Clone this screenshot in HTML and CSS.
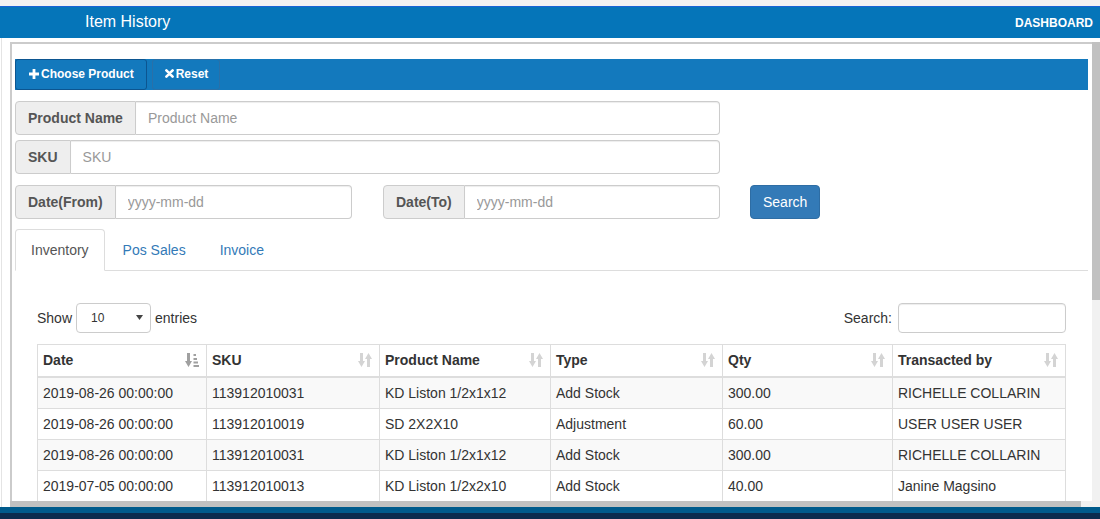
FILE: index.html
```html
<!DOCTYPE html>
<html lang="en">
<head>
<meta charset="utf-8">
<title>Item History</title>
<link rel="stylesheet" href="styles.css">
</head>
<body>
<div class="topstrip"></div>
<header class="appbar">
  <span class="title">Item History</span>
  <a class="dash">DASHBOARD</a>
</header>
<div class="workspace">
  <div class="viewport">
    <div class="panel">
      <div class="toolbar">
        <button class="tbtn tbtn-main">
          <svg width="10" height="10" viewBox="0 0 10 10"><path d="M3.6 0h2.8v3.6H10v2.8H6.4V10H3.6V6.4H0V3.6h3.6z" fill="#fff"/></svg>
          <span>Choose Product</span>
        </button>
        <button class="tbtn tbtn-reset">
          <svg width="9" height="9" viewBox="0 0 9 9"><path d="M1.4 1.4L7.6 7.6M7.6 1.4L1.4 7.6" stroke="#fff" stroke-width="2.6" stroke-linecap="round"/></svg>
          <span>Reset</span>
        </button>
      </div>

      <div class="igroup igroup-first">
        <span class="addon">Product Name</span>
        <input class="ifield" type="text" placeholder="Product Name">
      </div>
      <div class="igroup igroup-sku">
        <span class="addon">SKU</span>
        <input class="ifield" type="text" placeholder="SKU">
      </div>
      <div class="date-row">
        <div class="igroup igroup-date">
          <span class="addon">Date(From)</span>
          <input class="ifield" type="text" placeholder="yyyy-mm-dd">
        </div>
        <div class="igroup igroup-date igroup-to">
          <span class="addon">Date(To)</span>
          <input class="ifield" type="text" placeholder="yyyy-mm-dd">
        </div>
        <button class="btn-search">Search</button>
      </div>

      <nav class="tabs">
        <a class="tab active">Inventory</a>
        <a class="tab">Pos Sales</a>
        <a class="tab">Invoice</a>
      </nav>

      <div class="tab-content">
        <div class="dt-top">
          <div class="length">
            <span>Show</span>
            <div class="sel"><span>10</span><svg width="7" height="5" viewBox="0 0 7 5"><path d="M0 0h7L3.5 5z" fill="#444"/></svg></div>
            <span>entries</span>
          </div>
          <label class="dt-search">
            <span>Search:</span>
            <input class="search-input" type="text">
          </label>
        </div>

        <table class="grid">
          <colgroup>
            <col class="c1"><col class="c2"><col class="c3"><col class="c4"><col class="c5"><col class="c6">
          </colgroup>
          <thead>
            <tr>
              <th><svg class="sort" width="14" height="14" viewBox="0 0 14 14" fill="#a0a0a0"><path d="M2 0h3v8h2l-3.5 6L0 8h2z"/><rect x="8.5" y="1" width="2.5" height="2"/><rect x="8.5" y="5" width="3.5" height="2"/><rect x="8.5" y="8.5" width="4.5" height="2"/><rect x="8.5" y="12" width="5.5" height="2"/></svg>Date</th>
              <th><svg class="sort" width="14" height="14" viewBox="0 0 14 14" fill="#d4d4d4"><path d="M2 0h3v8h2l-3.5 6L0 8h2z M9 14h3V6h2L10.5 0 7 6h2z"/></svg>SKU</th>
              <th><svg class="sort" width="14" height="14" viewBox="0 0 14 14" fill="#d4d4d4"><path d="M2 0h3v8h2l-3.5 6L0 8h2z M9 14h3V6h2L10.5 0 7 6h2z"/></svg>Product Name</th>
              <th><svg class="sort" width="14" height="14" viewBox="0 0 14 14" fill="#d4d4d4"><path d="M2 0h3v8h2l-3.5 6L0 8h2z M9 14h3V6h2L10.5 0 7 6h2z"/></svg>Type</th>
              <th><svg class="sort" width="14" height="14" viewBox="0 0 14 14" fill="#d4d4d4"><path d="M2 0h3v8h2l-3.5 6L0 8h2z M9 14h3V6h2L10.5 0 7 6h2z"/></svg>Qty</th>
              <th><svg class="sort" width="14" height="14" viewBox="0 0 14 14" fill="#d4d4d4"><path d="M2 0h3v8h2l-3.5 6L0 8h2z M9 14h3V6h2L10.5 0 7 6h2z"/></svg>Transacted by</th>
            </tr>
          </thead>
          <tbody>
            <tr><td>2019-08-26 00:00:00</td><td>113912010031</td><td>KD Liston 1/2x1x12</td><td>Add Stock</td><td>300.00</td><td>RICHELLE COLLARIN</td></tr>
            <tr><td>2019-08-26 00:00:00</td><td>113912010019</td><td>SD 2X2X10</td><td>Adjustment</td><td>60.00</td><td>USER USER USER</td></tr>
            <tr><td>2019-08-26 00:00:00</td><td>113912010031</td><td>KD Liston 1/2x1x12</td><td>Add Stock</td><td>300.00</td><td>RICHELLE COLLARIN</td></tr>
            <tr><td>2019-07-05 00:00:00</td><td>113912010013</td><td>KD Liston 1/2x2x10</td><td>Add Stock</td><td>40.00</td><td>Janine Magsino</td></tr>
          </tbody>
        </table>
      </div>
    </div>
    <div class="hscroll"><div class="hthumb"></div></div>
  </div>
  <div class="vscroll"><div class="vthumb"></div></div>
</div>
<footer class="footer">
  <div class="footer-top"></div>
  <div class="footer-bottom"></div>
</footer>
</body>
</html>
```

FILE: styles.css
```css
html, body {
  margin: 0;
  padding: 0;
}
body {
  font-family: "Liberation Sans", Arial, sans-serif;
  font-size: 14px;
  color: #333;
  background: #fff;
  height: 519px;
  overflow: hidden;
}

.topstrip {
  height: 6px;
  background: #f2f2f2;
}

.appbar {
  height: 31px;
  border-top: 1px solid #1863d6;
  background: #0575b9;
  color: #fff;
  display: flex;
  align-items: center;
  justify-content: space-between;
  padding: 0 7px 0 85px;
}
.title {
  font-size: 16px;
  line-height: 31px;
  padding-bottom: 3px;
}
.dash {
  font-size: 12px;
  font-weight: bold;
  line-height: 31px;
  padding-top: 1px;
}

.workspace {
  display: flex;
  height: 469px;
  box-sizing: border-box;
  padding-top: 4px;
  margin-left: 1px;
  border-left: 1px solid #e4e4e4;
  padding-left: 8px;
}
.viewport {
  flex: 1;
  min-width: 0;
  display: flex;
  flex-direction: column;
}
.panel {
  flex: 1;
  min-height: 0;
  overflow: hidden;
  border-top: 2px solid #cbcbcb;
  border-left: 2px solid #cbcbcb;
  padding: 15px 4px 0 3px;
}
.hscroll {
  height: 6px;
  background: #f1f1f1;
}
.hthumb {
  width: 1071px;
  height: 6px;
  background: #c1c1c1;
}
.vscroll {
  width: 8px;
  background: #f1f1f1;
}
.vthumb {
  height: 258px;
  background: #c1c1c1;
}

.footer-top {
  height: 6px;
  background: #005b8c;
}
.footer-bottom {
  height: 6px;
  background: #0b2c4e;
}

/* toolbar */
.toolbar {
  display: flex;
  gap: 5px;
  height: 31px;
  background: #1379bd;
}
.tbtn {
  display: flex;
  align-items: center;
  gap: 2px;
  height: 31px;
  box-sizing: border-box;
  margin: 0;
  padding: 0 12px 2px 13px;
  border: 1px solid #0c5590;
  border-radius: 3px;
  background: #1379bd;
  color: #fff;
  font-family: "Liberation Sans", Arial, sans-serif;
  font-size: 12px;
  font-weight: bold;
}
.tbtn-reset {
  padding: 0 11px 2px 12px;
  border-color: #2a70a8;
}

/* input groups */
.igroup {
  display: flex;
  width: 705px;
  height: 34px;
  box-sizing: border-box;
}
.igroup-first { margin-top: 11px; }
.igroup-sku { margin-top: 5px; }
.addon {
  display: flex;
  align-items: center;
  padding: 0 12px;
  background: #eee;
  border: 1px solid #ccc;
  border-radius: 4px 0 0 4px;
  color: #555;
  font-weight: bold;
  white-space: nowrap;
}
.ifield {
  flex: 1;
  min-width: 0;
  margin: 0;
  border: 1px solid #ccc;
  border-left: 0;
  border-radius: 0 4px 4px 0;
  padding: 0 12px;
  font-family: "Liberation Sans", Arial, sans-serif;
  font-size: 14px;
  color: #555;
  box-shadow: inset 0 1px 1px rgba(0,0,0,.075);
  outline: none;
}
.ifield::placeholder { color: #999; }

.date-row {
  display: flex;
  margin-top: 11px;
}
.igroup-date { width: 337px; }
.igroup-to { margin-left: 31px; }
.btn-search {
  margin: 0 0 0 30px;
  height: 34px;
  padding: 0 12px;
  background: #337ab7;
  border: 1px solid #2e6da4;
  border-radius: 4px;
  color: #fff;
  font-family: "Liberation Sans", Arial, sans-serif;
  font-size: 14px;
}

/* tabs */
.tabs {
  display: flex;
  margin-top: 10px;
  border-bottom: 1px solid #ddd;
}
.tab {
  padding: 10px 15px;
  line-height: 20px;
  border: 1px solid transparent;
  border-radius: 4px 4px 0 0;
  margin-right: 2px;
  margin-bottom: -1px;
  color: #337ab7;
}
.tab.active {
  color: #555;
  background: #fff;
  border-color: #ddd;
  border-bottom-color: transparent;
}

.tab-content {
  padding: 32px 22px 0 22px;
}
.dt-top {
  display: flex;
  justify-content: space-between;
  align-items: center;
  height: 30px;
}
.length {
  display: flex;
  align-items: center;
  gap: 4px;
  padding-bottom: 1px;
}
.sel {
  width: 75px;
  height: 30px;
  box-sizing: border-box;
  border: 1px solid #ccc;
  border-radius: 4px;
  display: flex;
  align-items: center;
  justify-content: space-between;
  padding: 0 7px 0 14px;
  font-size: 12px;
  color: #333;
}
.dt-search {
  display: flex;
  align-items: center;
  gap: 6px;
}
.search-input {
  width: 168px;
  height: 30px;
  box-sizing: border-box;
  margin: 0;
  border: 1px solid #ccc;
  border-radius: 4px;
  box-shadow: inset 0 1px 1px rgba(0,0,0,.075);
}

/* table */
.grid {
  margin: 11px 0 0 0;
  width: 1028px;
  border-collapse: collapse;
  table-layout: fixed;
}
.c1 { width: 169px; }
.c2 { width: 173px; }
.c3 { width: 171px; }
.c4 { width: 172px; }
.c5 { width: 170px; }
.c6 { width: 173px; }
.grid th, .grid td {
  border: 1px solid #ddd;
  padding: 5px;
  line-height: 20px;
  text-align: left;
  white-space: nowrap;
  overflow: hidden;
}
.grid th {
  font-weight: bold;
  border-bottom: 2px solid #ddd;
  padding-bottom: 6px;
}
.sort {
  float: right;
  margin: 3px 2px 0 0;
}
.grid tbody tr:nth-child(odd) td {
  background: #f9f9f9;
}
```
